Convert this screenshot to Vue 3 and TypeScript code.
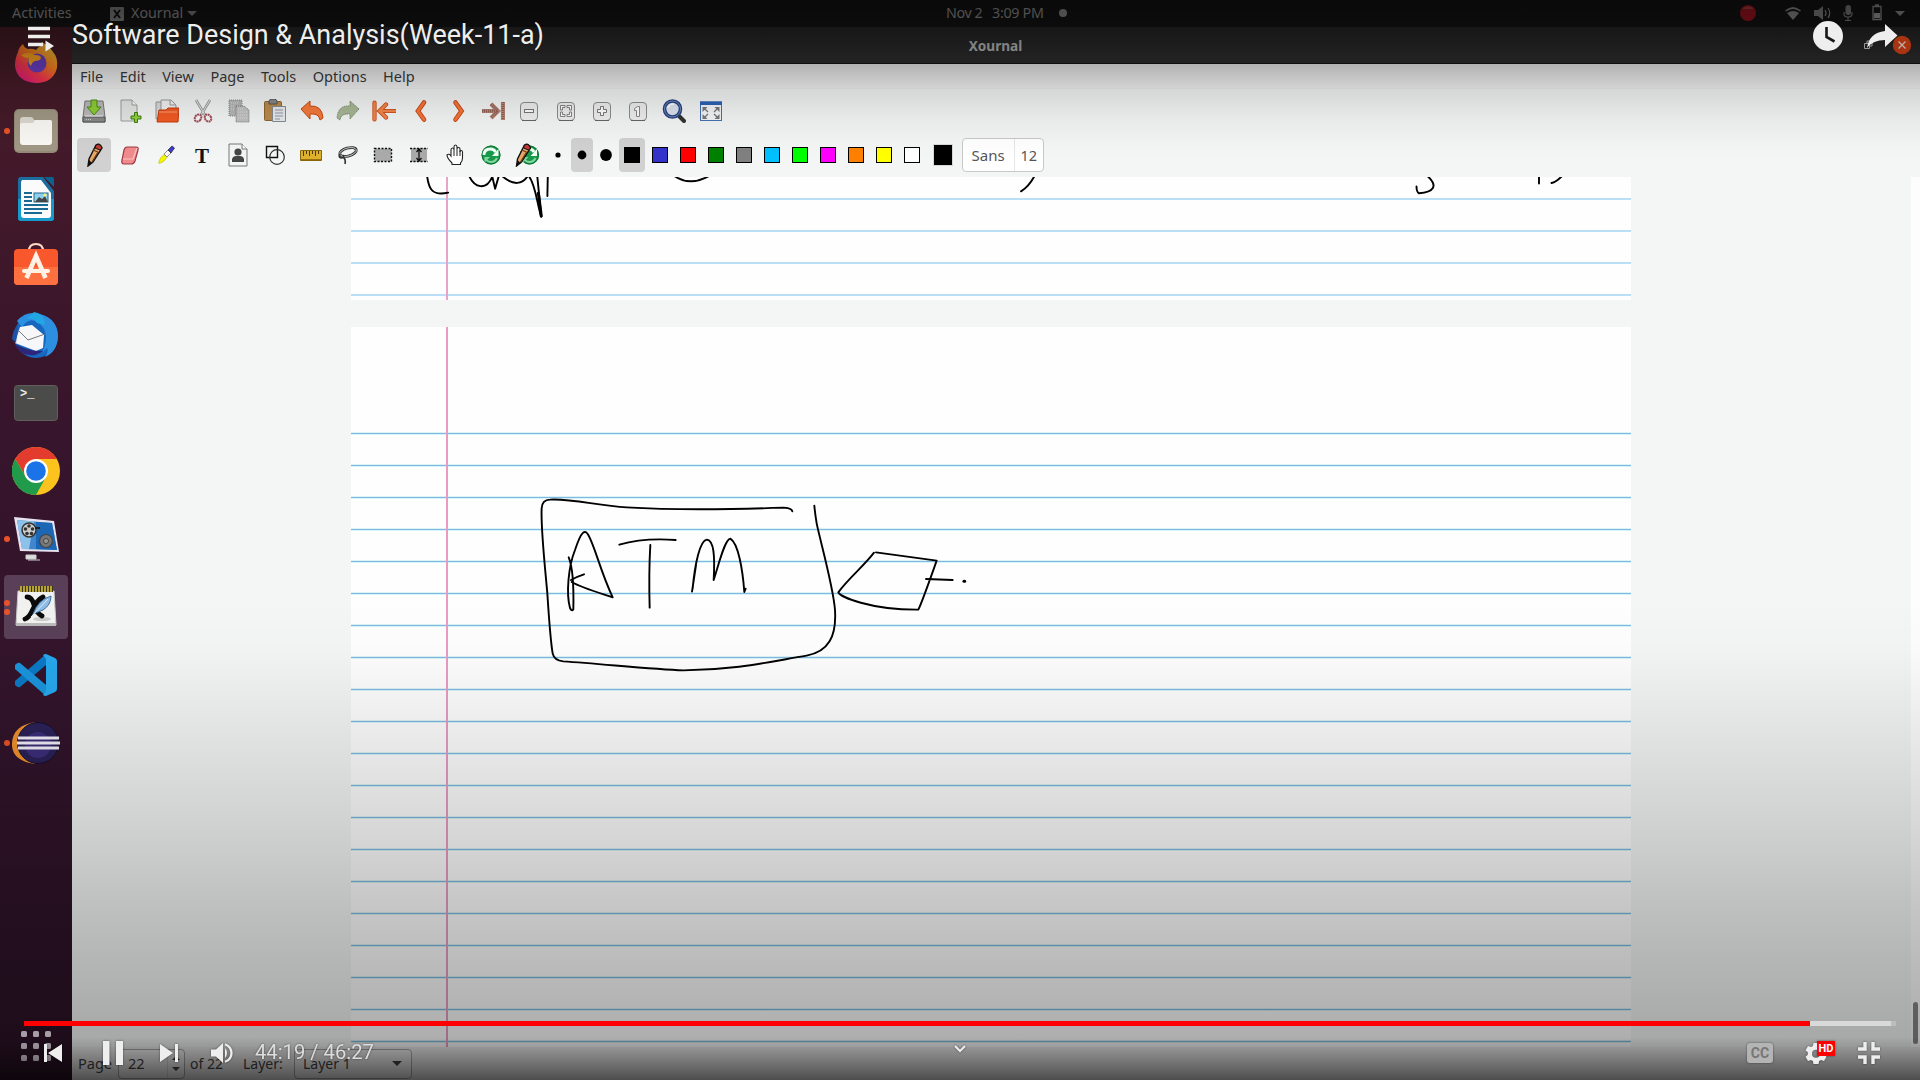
<script setup lang="ts">
interface Icon { name: string; art: string }
interface DockApp { name: string; art: string; windows: number; active?: boolean }

const menus: string[] = ['File', 'Edit', 'View', 'Page', 'Tools', 'Options', 'Help']

const zoomButton = '<rect x="3.500" y="3.500" width="17" height="18" rx="3.500" fill="#eee" stroke="#8b8b8b"/><path d="M5 21.500h14" stroke="#666"/>'

const mainTools: Icon[] = [
  { name: 'save', art: '<path d="M3 2h18l2 16v5H1v-5z" fill="#b9bab8" stroke="#777"/><path d="M1 18h22v5H1z" fill="#888" stroke="#555"/><path d="M3 17h18" stroke="#eee"/><path d="M4 20.500h6" stroke="#ccc" stroke-dasharray="1 1"/><path d="M9 1h6v7h4l-7 8-7-8h4z" fill="#8cce35" stroke="#4b8a16"/>' },
  { name: 'new', art: '<path d="M3 1h11l5 5v16H3z" fill="#e4e6e4" stroke="#9b9e9b"/><path d="M14 1v5h5" fill="#fafafa" stroke="#9b9e9b"/><path d="M16.500 13.500h3v3.500H23v3h-3.500v3.500h-3V20H13v-3h3.500z" fill="#8ed03c" stroke="#3e7b13"/>' },
  { name: 'open', art: '<path d="M1 3h5l1 2v15H1z" fill="#d8d8d8" stroke="#999"/><path d="M6 1h10l5 5v10H6z" fill="#f2f2f2" stroke="#999"/><path d="M15 1v5h6" fill="none" stroke="#999"/><path d="M4 11h7l2-2h11l-1 14H2z" fill="#f15a22" stroke="#c43c0c"/><path d="M4 13h18" stroke="#ff9b70"/>' },
  { name: 'cut', art: '<path d="M5 1l9 15M19 1l-9 15" stroke="#999" stroke-width="2.600"/><path d="M5 1l9 15M19 1l-9 15" stroke="#e4e4e4" stroke-width="1"/><ellipse cx="7" cy="19" rx="3" ry="3.800" transform="rotate(35 7 19)" fill="none" stroke="#a24d57" stroke-width="2" stroke-dasharray="2 .5"/><ellipse cx="17" cy="19" rx="3" ry="3.800" transform="rotate(-35 17 19)" fill="none" stroke="#a24d57" stroke-width="2" stroke-dasharray="2 .5"/>' },
  { name: 'copy', art: '<path d="M2 1h13v16H2z" fill="#b4b5b4" stroke="#888" stroke-dasharray="1 1"/><path d="M9 7h8l5 4v12H9z" fill="#bfc0bf" stroke="#777" stroke-dasharray="1 1"/><path d="M11 10h6M11 13h9M11 16h9M11 19h9M4 4h8M4 7h4M4 10h4" stroke="#dedede" stroke-dasharray="1 1"/>' },
  { name: 'paste', art: '<rect x="1.500" y="2.500" width="17" height="19" rx="1" fill="#b98a4c" stroke="#8c6532"/><path d="M6 2q0-2 4-2t4 2v3H6z" fill="#888" stroke="#555"/><path d="M9.500 7.500h13v15h-13z" fill="#e9eaec" stroke="#858b93"/><path d="M12 11h8M12 14h8M12 17h8M12 20h5" stroke="#8e97a8"/>' },
  { name: 'undo', art: '<path d="M1 10l9-8v5q12-1 13 12l-3 2q-1-7-10-6v5z" fill="#f47a3c" stroke="#c9470f" stroke-linejoin="round"/>' },
  { name: 'redo', art: '<path d="M23 10l-9-8v5q-12-1-13 12l3 2q1-7 10-6v5z" fill="#a8b896" stroke="#778c62" stroke-linejoin="round" stroke-dasharray="1.500 .7"/>' },
  { name: 'first', art: '<path d="M2.500 3.500v17M8 12h15M14 5.500L7.500 12l6.500 6.500" fill="none" stroke="#c9470f" stroke-width="4.200" stroke-linecap="round"/><path d="M2.500 3.500v17M8 12h15M14 5.500L7.500 12l6.500 6.500" fill="none" stroke="#f5854b" stroke-width="2.600" stroke-linecap="round"/>' },
  { name: 'prev', art: '<path d="M15 3.500L9 12l6 8.500" fill="none" stroke="#c9470f" stroke-width="4.600" stroke-linecap="round"/><path d="M15 3.500L9 12l6 8.500" fill="none" stroke="#f5743a" stroke-width="2.800" stroke-linecap="round"/>' },
  { name: 'next', art: '<path d="M10.500 3.500l6 8.500-6 8.500" fill="none" stroke="#c9470f" stroke-width="4.600" stroke-linecap="round"/><path d="M10.500 3.500l6 8.500-6 8.500" fill="none" stroke="#f5743a" stroke-width="2.800" stroke-linecap="round"/>' },
  { name: 'last', art: '<path d="M22 3v18M1 12h15M10 5l7 7-7 7" fill="none" stroke="#b98677" stroke-width="4.200"/><path d="M22 3v18M1 12h15M10 5l7 7-7 7" fill="none" stroke="#8f6154" stroke-width="3" stroke-dasharray="1 1"/>' },
  { name: 'zoom-out', art: zoomButton + '<rect x="7.500" y="10.500" width="9" height="3" fill="#fff" stroke="#777"/>' },
  { name: 'zoom-fit', art: zoomButton + '<path d="M6.500 11V6.500H11v2H8.500V11zM17.500 11V6.500H13v2h2.500V11zM6.500 13v4.500H11v-2H8.500V13zM17.500 13v4.500H13v-2h2.500V13z" fill="#fff" stroke="#777" stroke-width=".9"/>' },
  { name: 'zoom-in', art: zoomButton + '<path d="M10.500 7.500h3v3h3v3h-3v3h-3v-3h-3v-3h3z" fill="#fff" stroke="#777"/>' },
  { name: 'zoom-1', art: zoomButton + '<path d="M13.500 7.500v10h-3v-6h-2v-2l3-2z" fill="#fff" stroke="#888"/>' },
  { name: 'find', art: '<path d="M16 16l6 6" stroke="#333" stroke-width="4" stroke-linecap="round"/><circle cx="10.500" cy="10" r="8" fill="#dbe3ef" stroke="#28407c" stroke-width="3.600"/><circle cx="10.500" cy="10" r="8" fill="none" stroke="#6f8cc4" stroke-width="1"/><path d="M6 9q1-4 6-4" fill="none" stroke="#fff" stroke-width="1.500"/>' },
  { name: 'fullscreen', art: '<rect x="1.500" y="3" width="21" height="18.500" fill="#f4f5f7" stroke="#4470b4"/><path d="M1 2.500h22V6H1z" fill="#2a63b5"/><path d="M3.500 8h5l-5 5zM20.500 8h-5l5 5zM3.500 20h5l-5-5zM20.500 20h-5l5-5z" fill="#777"/><path d="M5 9l4 4M19 9l-4 4M5 19l4-4M19 19l-4-4" stroke="#777" stroke-width="1.300"/>' },
]

const recycle = '<circle cx="12" cy="12" r="9.500" fill="#17994a"/><circle cx="12" cy="12" r="9" fill="none" stroke="#0c7433"/><path d="M5 12q0-6 6.500-6 3.500 0 5 3" fill="none" stroke="#f2fff6" stroke-width="2.800"/><path d="M19.500 6v7H13z" fill="#f2fff6"/><path d="M18 15q-2 4-6 4-3 0-4.500-2" fill="none" stroke="#84d6a1" stroke-width="2"/><path d="M5.500 19.500V14H11z" fill="#84d6a1"/>'
const pencil = '<path d="M14 2q3-2 5 1l1 2-9 14-5 4 1-7z" fill="#e8a768" stroke="#111" stroke-width="1.400"/><path d="M14 2q3-2 5 1l1 2-2 2-5-2z" fill="#c23b36" stroke="#111"/><path d="M11 7l5 2M10 19l6-10" stroke="#6b3d18" stroke-width="1.200"/><path d="M7 17l-1 6 4-3z" fill="#111"/>'

const penTools: Icon[] = [
  { name: 'pencil', art: pencil },
  { name: 'eraser', art: '<path d="M9 4h9q3 0 2 3l-3 11q-1 3-4 3H6q-3 0-2-4l2-10q1-3 3-3z" fill="#ef8b8d" stroke="#9f3840" stroke-width="1.200"/><path d="M5 16h10l4-11" fill="none" stroke="#fbc3c3" stroke-width="1.200"/>' },
  { name: 'highlighter', art: '<path d="M4.500 20l2-5 3.500-3.500 3 3-3.500 4-4 2z" fill="#f5f500" stroke="#aaaa00" stroke-width=".5"/><path d="M10 11l4-4 3 3-4 4z" fill="#f7f7f7" stroke="#666" stroke-width=".7"/><path d="M14 7l4-4 2.500 2-3.500 5z" fill="#3d3bd0" stroke="#222" stroke-width=".7"/>' },
  { name: 'text', art: '<text x="12" y="20" text-anchor="middle" font-family="Liberation Serif, serif" font-weight="bold" font-size="21" fill="#111">T</text>' },
  { name: 'image', art: '<path d="M3 1h13l5 5v17H3z" fill="#f3f4f4" stroke="#777"/><path d="M16 1v5h5" fill="#fff" stroke="#777"/><circle cx="12" cy="9" r="3.600" fill="#444"/><path d="M6 19v-3q1-3 4-3h4q3 0 4 3v3z" fill="#444"/>' },
  { name: 'shapes', art: '<path d="M3.500 3.500h11v11h-11z" fill="none" stroke="#111" stroke-width="1.400"/><circle cx="14" cy="14" r="7.300" fill="none" stroke="#333" stroke-width="1.200"/>' },
  { name: 'ruler', art: '<path d="M1.500 7.500h21v10h-21z" fill="#ddb12b" stroke="#8a6a10"/><path d="M2 17h20" stroke="#8a6208" stroke-width="1.600"/><path d="M4.500 8v5M7.500 8v3M10.500 8v5M13.500 8v3M16.500 8v5M19.500 8v3" stroke="#4c3a05"/>' },
  { name: 'lasso', art: '<ellipse cx="13" cy="9" rx="8.500" ry="4" transform="rotate(-15 13 9)" fill="none" stroke="#333" stroke-width="2.800"/><ellipse cx="13" cy="9" rx="8.500" ry="4" transform="rotate(-15 13 9)" fill="none" stroke="#ccc" stroke-width=".9"/><path d="M5 11q-2 3 1 4 4 0 2-3M8 14q3 2 2 7" fill="none" stroke="#333" stroke-width="1.600"/>' },
  { name: 'select', art: '<path d="M3.500 5.500h17v13h-17z" fill="#aaa" stroke="#111" stroke-width="1.400" stroke-dasharray="2 1.500"/>' },
  { name: 'vspace', art: '<path d="M4 5h16v14H4z" fill="#aaa"/><path d="M3 5.500h18M3 18.500h18" stroke="#111" stroke-width="1.400" stroke-dasharray="2 1.500"/><path d="M12 6v12M9.500 9L12 6l2.500 3M9.500 15l2.500 3 2.500-3" fill="none" stroke="#111" stroke-width="1.300"/>' },
  { name: 'hand', art: '<path d="M9 20q-5-5-5-8 2-2 4 1V7q0-2 1.500-2T11 7V4q0-2 1.500-2T14 4v2q0-1.500 1.500-1.500T17 6v3q0-1.500 1.200-1.500T19.500 9v6q0 3-2 5v1.500H9z" fill="#fff" stroke="#222" stroke-width="1.100"/><path d="M11 7v6M14 6v7M17 8v5" stroke="#222"/>' },
  { name: 'default', art: recycle },
  { name: 'default-pen', art: '<g transform="translate(2.500 0)">' + recycle + '</g><g transform="translate(-4.500 0)">' + pencil + '</g>' },
]

const dots: { r: number; on: boolean }[] = [{ r: 2.6, on: false }, { r: 4.4, on: true }, { r: 5.9, on: false }]
const colors: string[] = ['#000000', '#3333cc', '#ff0000', '#008000', '#808080', '#00c0ff', '#00ff00', '#ff00ff', '#ff8000', '#ffff00', '#ffffff']

const apps: DockApp[] = [
  { name: 'Firefox', windows: 0, art: '<defs><linearGradient id="fx" x1="1" y1="0" x2=".3" y2="1"><stop offset="0" stop-color="#ffe14a"/><stop offset=".45" stop-color="#ff8a1e"/><stop offset=".75" stop-color="#ff3a4f"/><stop offset="1" stop-color="#e51e78"/></linearGradient></defs><path d="M6 14q1-5 5-8 1 4 5 5 4-1 8 1 2-3 5-4 0-3 1-4 8 5 11 10 5 5 4 16-4 15-21 15Q5 44 3 28q0-8 3-14z" fill="url(#fx)"/><circle cx="25" cy="25" r="9.500" fill="#6d40c8"/><path d="M9 17q8-4 14 0 6 0 6 3-1 3-6 3-3 1-4 5-4-4-2-8-5 0-8-3z" fill="#ffa51f"/>' },
  { name: 'Files', windows: 1, art: '<rect x="2" y="2" width="44" height="44" rx="5" fill="#938a78"/><rect x="3" y="3" width="42" height="41" rx="4" fill="#a09784"/><path d="M8 13q0-3 3-3h8q2 0 3 3h16q2 0 2 3v20H8z" fill="#dcd8d0"/><path d="M8 18q0-2 2-2h11l2-3h15q2 0 2 2v20q0 3-3 3H11q-3 0-3-3z" fill="#faf8f4"/>' },
  { name: 'Writer', windows: 0, art: '<path d="M9 2h22l11 14v27q0 3-3 3H9q-3 0-3-3V5q0-3 3-3z" fill="#1b6e9f"/><path d="M6 24h36v19q0 3-3 3H9q-3 0-3-3z" fill="#1899cc"/><path d="M32 2h8q2 0 2 2v8z" fill="#0c6390"/><path d="M10 5h19l10 13v22q0 3-3 3H12q-3 0-3-3V7z" fill="#fbfbfb"/><path d="M12 18h8M12 22h8M12 26h8M12 30h24M12 34h24M12 38h18" stroke="#176a93" stroke-width="2"/><rect x="22" y="18" width="14" height="9" fill="#8dd1ee" stroke="#22678c"/><path d="M23 27l4-5 3 2 3-3 3 6z" fill="#444"/><circle cx="33" cy="20" r="1.500" fill="#fff176"/>' },
  { name: 'Software', windows: 0, art: '<path d="M17 8q0-7 7-7t7 7" fill="none" stroke="#ffd9c5" stroke-width="2"/><rect x="2" y="6" width="44" height="36" rx="4" fill="#f9582c"/><path d="M2 24h44v14q0 4-4 4H6q-4 0-4-4z" fill="#ff7040"/><path d="M14.500 35L24 13l9.500 22" fill="none" stroke="#fff1e6" stroke-width="4.600"/><path d="M12 28h24" stroke="#fff1e6" stroke-width="4" stroke-linecap="round"/>' },
  { name: 'Thunderbird', windows: 0, art: '<circle cx="24" cy="25" r="22" fill="#1766bf"/><path d="M5 10Q14-1 28 3q18 5 18 23-1 15-13 20 4-5 2-9l-5 5Q40 20 25 11q-8-5-15 5z" fill="#2d8fe0"/><path d="M22 1q10 1 11 13l-8-2q-3-5-11-4z" fill="#22a6e4"/><path d="M8 16l12-2 12 10-1 13-7 3L3 32z" fill="#f7f7fa"/><path d="M6 19l10 10 17-6" fill="none" stroke="#777" stroke-width="1"/><path d="M3 33q15 8 28 7-6 5-14 4Q6 43 3 33z" fill="#2e2678"/><path d="M0 28q1-10 6-14l-2 18z" fill="#1c53a8"/>' },
  { name: 'Terminal', windows: 0, art: '<rect x="2.500" y="6.500" width="43" height="35" rx="3" fill="#4b4b49" stroke="#5f5f5d"/><text x="8" y="18" font-family="Liberation Mono, monospace" font-weight="bold" font-size="12" fill="#eee">&gt;_</text>' },
  { name: 'Chrome', windows: 0, art: '<circle cx="24" cy="24" r="24" fill="#fcc31e"/><path d="M24 0a24 24 0 0 1 20.800 12H24L14 30 3.200 12A24 24 0 0 1 24 0z" fill="#e33b2e"/><path d="M3.200 12A24 24 0 0 0 24 48l10-18H14z" fill="#1f9b4b"/><circle cx="24" cy="24" r="12" fill="#fff"/><circle cx="24" cy="24" r="9.800" fill="#1b73e8"/>' },
  { name: 'Kazam', windows: 1, art: '<path d="M2 2l40 4 5 31-39-1z" fill="#e7e2ee"/><path d="M5 5l35 3 5 27-35-1z" fill="#3f86cc"/><path d="M24 7l16 1 5 27-21-1z" fill="#1c66b4"/><path d="M5 5l17 1.500L17 34h-7z" fill="#8cc1ea"/><circle cx="17" cy="15" r="7" fill="#ccc" stroke="#333" stroke-width="1.500"/><g fill="#333"><circle cx="17" cy="11" r="1.800"/><circle cx="13.500" cy="14" r="1.800"/><circle cx="15" cy="18.500" r="1.800"/><circle cx="19.500" cy="18.500" r="1.800"/><circle cx="20.500" cy="14" r="1.800"/></g><path d="M23 13h5" stroke="#222" stroke-width="2"/><circle cx="34" cy="26" r="6.500" fill="#777" stroke="#444" stroke-width="1.200"/><circle cx="34" cy="26" r="2.500" fill="#999" stroke="#444"/><path d="M14 40h10v4H14zM16 45h12" fill="#ddd" stroke="#ccc"/>' },
  { name: 'Xournal', windows: 2, active: true, art: '<path d="M6 8h36l2 34H4z" fill="#f1f1f0" stroke="#c9c9c9"/><path d="M4 40h40v3H4z" fill="#bbb"/><path d="M8 3h33v6H8z" fill="#3b3618"/><path d="M9 3v6M12 3v6M15 3v6M18 3v6M21 3v6M24 3v6M27 3v6M30 3v6M33 3v6M36 3v6M39 3v6" stroke="#d6bf3e" stroke-width="1.600"/><ellipse cx="30" cy="36" rx="9" ry="2" fill="#ccc"/><path d="M15 14q5 0 7 8t8 11M31 14q-6 3-10 12t-8 10" fill="none" stroke="#0b0b0b" stroke-width="4.800" stroke-linecap="round"/><path d="M21 31q5-14 18-18 0 9-8 14-5 2-10 4z" fill="#8fbce4" stroke="#3f6e9e"/><path d="M19 34L36 16" stroke="#dcecf8"/>' },
  { name: 'Code', windows: 0, art: '<path d="M34 14L8 36q-2 1-5-2v-4L34 3z" fill="#0a79c5"/><path d="M34 34L8 12q-2-1-5 2v4l31 27z" fill="#1b94dc"/><path d="M34 3l9 4q2 1 2 3v28q0 2-2 3l-9 4q-2 0-3-1l3-4V8l-3-4q1-1 3-1z" fill="#27a8ee"/>' },
  { name: 'Eclipse', windows: 1, art: '<path d="M24 3Q1 6 0 24t24 21Q9 39 8 24T24 3z" fill="#f0902c"/><circle cx="26" cy="24" r="20.500" fill="#2b2158" stroke="#16102e"/><circle cx="26" cy="26" r="13" fill="#43338a" opacity=".7"/><path d="M6 19h41M5 24h43M6 29h41" stroke="#f3effa" stroke-width="2.800"/>' },
]
</script>

<template>
  <div class="screen">
    <header class="topbar">
      <span class="activities">Activities</span>
      <svg class="appicon" width="14" height="14" viewBox="0 0 14 14"><rect width="14" height="14" rx="1" fill="#8c8c8c" /><path d="M4 3l6 8M10 3l-6 8" stroke="#151515" stroke-width="2" /></svg>
      <span>Xournal</span>
      <i class="tri"></i>
      <div class="clock"><span>Nov 2</span><span>3:09 PM</span><i></i></div>
      <div class="tray">
        <svg width="172" height="27" viewBox="0 0 172 27">
          <circle cx="10" cy="13" r="8" fill="#ae1522" /><path d="M4 9a8 8 0 0 1 12 0z" fill="#b94446" />
          <path d="M47 10.500q8-7 16 0l-1 1q-7-5-14 0zM49 13q6-4 12 0l-6 7z" fill="#999" />
          <path d="M76 10h4l5-4v14l-5-4h-4z" fill="#8e8e8e" /><path d="M87 10q2 3 0 6M90 8q3.500 5 0 10" fill="none" stroke="#999" stroke-width="1.200" />
          <rect x="107.500" y="5" width="5.500" height="10" rx="2.700" fill="#888" /><path d="M106 12v2q0 3 4 3t4-3v-2M110 17v3.500M107 20.500h6" fill="none" stroke="#888" stroke-width="1.200" />
          <path d="M135 6.500h8v13h-8zM137 5h4" fill="none" stroke="#999" stroke-width="1.300" /><path d="M136 13h6v5h-6z" fill="#aaa" />
          <path d="M157 11h10l-5 5z" fill="#999" />
        </svg>
      </div>
    </header>

    <div class="body">
      <nav class="dock">
        <div v-for="app in apps" :key="app.name" class="app" :class="{ active: app.active }">
          <div class="pips"><i v-for="n in app.windows" :key="n"></i></div>
          <svg width="48" height="48" viewBox="0 0 48 48" v-html="app.art"></svg>
        </div>
        <div class="grid"><i v-for="n in 9" :key="n"></i></div>
      </nav>

      <main class="window">
        <div class="titlebar">Xournal</div>
        <div class="menubar"><span v-for="m in menus" :key="m">{{ m }}</span></div>
        <div class="toolbar">
          <div v-for="t in mainTools" :key="t.name" class="tool"><svg width="24" height="24" viewBox="0 0 24 24" v-html="t.art"></svg></div>
        </div>
        <div class="toolbar pens">
          <div v-for="(t, i) in penTools" :key="t.name" class="tool" :class="{ on: i === 0 }"><svg width="24" height="24" viewBox="0 0 24 24" v-html="t.art"></svg></div>
          <div v-for="d in dots" :key="d.r" class="dot" :class="{ on: d.on }"><svg width="16" height="16"><circle cx="8" cy="8" :r="d.r" /></svg></div>
          <div v-for="(c, i) in colors" :key="c" class="swatch" :class="{ on: i === 0 }"><i :style="{ background: c }"></i></div>
          <div class="current"></div>
          <div class="font"><span>Sans</span><span>12</span></div>
        </div>

        <div class="canvas">
          <div class="pages">
            <svg class="sheet" width="1280" height="123" viewBox="351 177 1280 123">
              <path d="M351 199h1280M351 231h1280M351 263h1280M351 295h1280" stroke="#bbdef8" stroke-width="2" />
              <path d="M447 177v123" stroke="#e8a3c9" stroke-width="2" />
              <g class="ink">
                <g transform="translate(400 160) scale(.4083 .3333)">
                  <path d="M66 44C70 90 80 108 118 98M168 44C182 86 212 92 226 50L233 86L242 48M250 48C278 78 300 74 314 46C332 70 335 130 346 170L336 46M362 44L361 108M672 48Q710 80 757 48M1554 48Q1540 80 1521 94" />
                  <path class="bold" d="M339 100L346 168" />
                </g>
                <path d="M1428 176.500C1438 186 1434 192 1419 193.300Q1416.500 192 1416.500 186.500M1539 176v7.500M1561.500 176.500Q1556 182 1551.500 183" />
              </g>
            </svg>
            <svg class="sheet" width="1280" height="720" viewBox="351 327 1280 720">
              <path v-for="n in 20" :key="n" :d="`M351 ${401.5 + n * 32}h1280`" stroke="#d8f2f8" stroke-width="3" />
              <path v-for="n in 20" :key="n" :d="`M351 ${401.5 + n * 32}h1280`" stroke="#82b9de" stroke-width="1" />
              <path d="M447 327v720" stroke="#e79cc4" stroke-width="2" />
              <g class="ink" transform="translate(520 480) scale(.33333)">
                <path d="M817 94Q815 84 790 83C650 88 450 90 320 82C230 76 150 55 90 59Q66 60 65 85C62 140 73 240 82 340C88 430 91 480 98 520Q102 541 130 544C250 552 400 568 490 571C650 570 750 545 860 527C925 515 950 470 945 390C940 320 900 180 890 130Q885 100 883 77" />
                <path d="M146 232C158 260 162 300 160 388Q155 395 150 384C138 340 145 260 165 210C185 150 195 148 205 165C225 200 240 270 278 352C250 342 190 326 155 306M192 283Q170 290 153 300" />
                <path d="M298 194Q370 173 467 180M391 195Q386 280 389 383" />
                <path d="M516 335L528 255M518 325C525 250 540 182 560 179C582 180 585 230 581 300C600 240 615 178 631 176C655 190 668 270 673 336L677 326" />
                <path d="M1062 218C1030 260 985 295 955 337C960 350 1050 390 1195 389Q1205 370 1250 242L1068 217M1218 297L1298 300" />
                <path class="bold" d="M1332 304h2" />
              </g>
            </svg>
          </div>
          <div class="scroll"><i></i></div>
        </div>

        <footer class="status">
          <span class="lbl">Page</span>
          <div class="spin"><span>22</span><div class="arrows"><i class="up"></i><i class="tri"></i></div></div>
          <span class="of">of 22</span>
          <span class="layer">Layer:</span>
          <div class="combo"><span>Layer 1</span><i class="tri"></i></div>
        </footer>
      </main>
    </div>

    <div class="shade top"></div>
    <div class="shade bottom"></div>

    <div class="player-top">
      <svg width="28" height="26" viewBox="0 0 28 26"><path d="M0 2.500h22M0 10.500h22M0 18.500h15" stroke="#eee" stroke-width="3.400" /><path d="M17.500 14.500v11l8.500-5.500z" fill="#eee" /></svg>
      <h1>Software Design &amp; Analysis(Week-11-a)</h1>
      <svg class="actions" width="100" height="50" viewBox="1812 14 100 50">
        <circle cx="1902" cy="45" r="9.200" fill="#a83411" /><path d="M1898.500 41.500l7 7M1905.500 41.500l-7 7" stroke="#bdb0aa" stroke-width="1.300" />
        <path d="M1864.500 43.500h5v5h-5zM1867 43v-2h5v5h-2" fill="none" stroke="#999" />
        <circle cx="1828" cy="36" r="15" fill="#eee" /><path d="M1826.500 27v10l8 4.500" fill="none" stroke="#171717" stroke-width="2.600" />
        <path d="M1885 24l12.500 11.500L1885 47v-7q-12 0-18 8 2-15 18-17z" fill="#eee" />
      </svg>
    </div>

    <div class="player-bottom">
      <div class="progress"><i class="played"></i><i class="loaded"></i></div>
      <div class="controls">
        <svg class="left" width="200" height="34" viewBox="40 1036 200 34">
          <path d="M44 1044h3v18h-3zM62 1044v18l-14-9zM103 1041h6.500v24H103zM116 1041h7v24h-7zM160 1044v18l13-9zM175 1044h3v18h-3zM211 1049.500h5l7-6.500v20l-7-6.500h-5zM225 1048q4 5 0 10z" fill="#eee" />
          <path d="M225 1044.200q6.500 2.500 6.500 8.800t-6.500 8.800" fill="none" stroke="#eee" stroke-width="2.300" />
        </svg>
        <span class="time">44:19 / 46:27</span>
        <svg class="chevron" width="14" height="10" viewBox="0 0 14 10"><path d="M2 2l5 5 5-5" fill="none" stroke="#eee" stroke-width="2" /></svg>
        <div class="right">
          <span class="cc">CC</span>
          <div class="gear">
            <svg width="24" height="24" viewBox="0 0 24 24"><path fill="#eee" fill-rule="evenodd" d="M9.500 1h5l.6 3 2 1.100 2.900-1.100 2.500 4.300-2.300 2v2.400l2.300 2-2.500 4.300-2.900-1-2 1.100-.6 2.900h-5l-.6-2.900-2-1.100-2.900 1-2.500-4.300 2.300-2v-2.400l-2.300-2L4 4l2.900 1.100L8.900 4zM12 7.800a4 4 0 1 0 0 8 4 4 0 0 0 0-8z" /></svg>
            <b>HD</b>
          </div>
          <svg width="22" height="22" viewBox="0 0 22 22"><path d="M0 7h7V0M15 0v7h7M0 15h7v7M22 15h-7v7" fill="none" stroke="#eee" stroke-width="3.400" /></svg>
        </div>
      </div>
    </div>
  </div>
</template>

<style>
body { margin: 0; overflow: hidden; background: #000; }
</style>

<style scoped>
.screen { position: relative; display: flex; flex-direction: column; width: 1920px; height: 1080px; overflow: hidden; font-family: "Noto Sans", sans-serif; font-size: 14.5px; line-height: 1; color: #3a3a3a; }
svg { display: block; flex: none; }
.topbar { position: relative; display: flex; align-items: center; height: 27px; box-sizing: border-box; padding-left: 12px; background: #161515; color: #9b9b9b; flex: none; }
.activities { width: 98px; }
.topbar > span { font-size: 14.3px; padding-bottom: 1px; }
.appicon { margin-right: 7px; }
.tri { width: 0; height: 0; border: 5px solid transparent; border-top-color: currentColor; border-bottom: 0; }
.topbar > .tri { margin-left: 4px; border-top-color: #888; }
.clock { position: absolute; left: 946px; top: 0; height: 26px; display: flex; align-items: center; gap: 10px; font-size: 14.3px; white-space: nowrap; }
.clock i { width: 8px; height: 8px; border-radius: 50%; background: #999; margin-left: 4px; }
.clock span:first-child { width: 36px; letter-spacing: -.4px; }
.clock span:nth-child(2) { width: 53px; letter-spacing: -.3px; }
.tray { margin-left: auto; margin-right: 10px; }
.body { display: flex; flex: 1; min-height: 0; }
.dock { width: 72px; flex: none; box-sizing: border-box; padding: 4px; display: flex; flex-direction: column; gap: 4px; background: linear-gradient(#471c27, #42192a 15%, #37152c 38%, #32142b 65%, #2b1226); }
.app { height: 64px; flex: none; display: flex; align-items: center; justify-content: center; position: relative; border-radius: 4px; }
.app.active { background: #594058; }
.app:first-child > svg { margin-top: -3px; }
.pips { position: absolute; left: 0; top: 0; height: 64px; display: flex; flex-direction: column; justify-content: center; gap: 3px; }
.pips i { width: 6px; height: 6px; border-radius: 50%; background: #e95228; }
.grid { margin: auto 0 15px 17px; display: grid; grid-template-columns: repeat(3, 6px); gap: 6px; }
.grid i { width: 6px; height: 6px; border-radius: 1.5px; background: #f2e4f0; }
.window { flex: 1; min-width: 0; display: flex; flex-direction: column; background: #f4f6f6; }
.titlebar { height: 37px; flex: none; box-sizing: border-box; border-bottom: 1px solid #151515; background: linear-gradient(#292828, #323131); color: #c8c8c8; font-weight: bold; font-size: 13.6px; display: flex; align-items: center; justify-content: center; padding: 2px 1px 0 0; }
.menubar { height: 25px; flex: none; box-sizing: border-box; border-bottom: 1px solid #eeeeee; background: #f4f4f4; display: flex; align-items: center; gap: 16.5px; padding-left: 8px; }
.toolbar { height: 44px; flex: none; display: flex; align-items: center; padding-left: 4px; }
.toolbar:not(.pens) { box-sizing: border-box; padding-bottom: 1px; }
.tool { width: 36.27px; height: 34px; display: flex; align-items: center; justify-content: center; flex: none; }
.pens .tool { width: 36.13px; }
.pens .tool.on { width: 34px; margin: 0 1px; }
.dot { width: 24px; height: 34px; display: flex; align-items: center; justify-content: center; }
.on { background: #d1d1d1; border-radius: 4px; }
.dot.on { width: 22px; margin: 0 1px; }
.swatch { width: 28px; height: 34px; display: flex; align-items: center; justify-content: center; border-radius: 4px; }
.swatch.on { width: 26px; margin: 0 1px; }
.swatch i { width: 14px; height: 14px; border: 1px solid #000; }
.current { width: 18px; height: 20px; background: #000; margin: 0 10px 0 8px; outline: 1px solid #d8d8d8; }
.font { width: 80px; height: 32px; display: flex; align-items: center; border: 1px solid #c8c8c8; border-radius: 4px; background: #fff; color: #555; }
.font span { height: 32px; display: flex; align-items: center; padding-left: 9px; }
.font span:first-child { width: 42px; border-right: 1px solid #e6e6e6; font-size: 15px; }
.font span:last-child { padding-left: 6px; }
.canvas { flex: 1; min-height: 0; display: flex; justify-content: space-between; }
.pages { width: 1280px; margin-left: 279px; display: flex; flex-direction: column; gap: 27px; }
.sheet { background: #fefefe; }
.ink path { fill: none; stroke: #000; stroke-width: 1.9; stroke-linecap: round; stroke-linejoin: round; vector-effect: non-scaling-stroke; }
.ink .bold { stroke-width: 3; }
.scroll { width: 9px; background: #fdfdfd; display: flex; justify-content: center; align-items: flex-end; }
.scroll i { width: 5px; height: 42px; border-radius: 3px; background: #878787; margin-bottom: 3px; }
.status { height: 33px; flex: none; display: flex; align-items: center; padding-left: 6px; color: #444; background: #f1f1f1; }
.lbl { width: 40px; }
.spin { width: 65px; height: 28px; border: 1px solid #aaa; border-radius: 4px; display: flex; align-items: center; justify-content: space-between; background: #f6f6f6; }
.spin span { padding-left: 9px; }
.arrows { height: 28px; width: 15px; padding-right: 1px; border-left: 1px solid #ddd; display: flex; flex-direction: column; align-items: center; justify-content: space-evenly; }
.arrows .tri, .arrows .up { border-width: 4px; }
.arrows .tri { border-bottom: 0; }
.up { width: 0; height: 0; border: 4px solid transparent; border-bottom-color: currentColor; border-top: 0 !important; }
.of { margin-left: 5px; width: 53px; font-size: 14px; }
.layer { width: 51px; font-size: 14px; }
.combo { width: 116px; height: 28px; border: 1px solid #aaa; border-radius: 4px; display: flex; align-items: center; justify-content: space-between; font-size: 14px; background: #f4f4f4; }
.combo span { padding-left: 8px; }
.combo .tri { margin-right: 9px; }
.shade { position: absolute; left: 0; width: 1920px; pointer-events: none; }
.shade.top { top: 0; height: 160px; background: linear-gradient(rgba(0,0,0,.55), rgba(0,0,0,.43) 27px, rgba(0,0,0,.27) 64px, rgba(0,0,0,.13) 89px, rgba(0,0,0,.05) 118px, rgba(0,0,0,.01) 145px, rgba(0,0,0,0)); }
.shade.bottom { top: 600px; height: 480px; background: linear-gradient(rgba(0,0,0,0), rgba(0,0,0,.01) 50px, rgba(0,0,0,.05) 100px, rgba(0,0,0,.09) 150px, rgba(0,0,0,.13) 200px, rgba(0,0,0,.17) 250px, rgba(0,0,0,.215) 300px, rgba(0,0,0,.255) 350px, rgba(0,0,0,.29) 400px, rgba(0,0,0,.315) 437px, rgba(0,0,0,.4) 449px, rgba(0,0,0,.68)); }
.player-top { position: absolute; left: 0; top: 14px; width: 1912px; height: 50px; display: flex; align-items: flex-start; }
.player-top > svg:first-child { margin: 12px 0 0 28px; }
.player-top h1 { margin: 4px 0 0 16px; font: 400 28px/34px Roboto, sans-serif; color: #eee; white-space: nowrap; text-shadow: 0 0 2px rgba(0,0,0,.5); transform: scaleX(.962); transform-origin: 0 0; }
.actions { margin-left: auto; }
.player-bottom { position: absolute; left: 24px; top: 1021px; width: 1872px; height: 59px; }
.progress { display: flex; height: 5px; background: #bdbdbd; }
.played { width: 1786px; background: #f00; }
.loaded { width: 81px; background: #d9d9d9; }
.controls { display: flex; align-items: flex-start; padding: 10px 16px 0; filter: drop-shadow(0 0 1px rgba(0,0,0,.45)); }
.time { margin: 4px 0 0 15px; width: 118px; font: 400 20.2px/24px Roboto, sans-serif; color: #ddd; white-space: nowrap; }
.chevron { margin: 8px 0 0 580px; }
.right { margin-left: auto; display: flex; align-items: flex-start; padding-top: 6px; }
.cc { width: 26px; height: 20px; margin: 1px 31px 0 0; border-radius: 3px; background: #b4b4b4; color: #777; font: 700 14px/21px Roboto, sans-serif; text-align: center; }
.gear { position: relative; width: 54px; }
.gear b { position: absolute; left: 13px; top: -1px; width: 18px; height: 15px; background: #f00; color: #fff; font: 700 11px/15px Roboto, sans-serif; text-align: center; }
</style>
